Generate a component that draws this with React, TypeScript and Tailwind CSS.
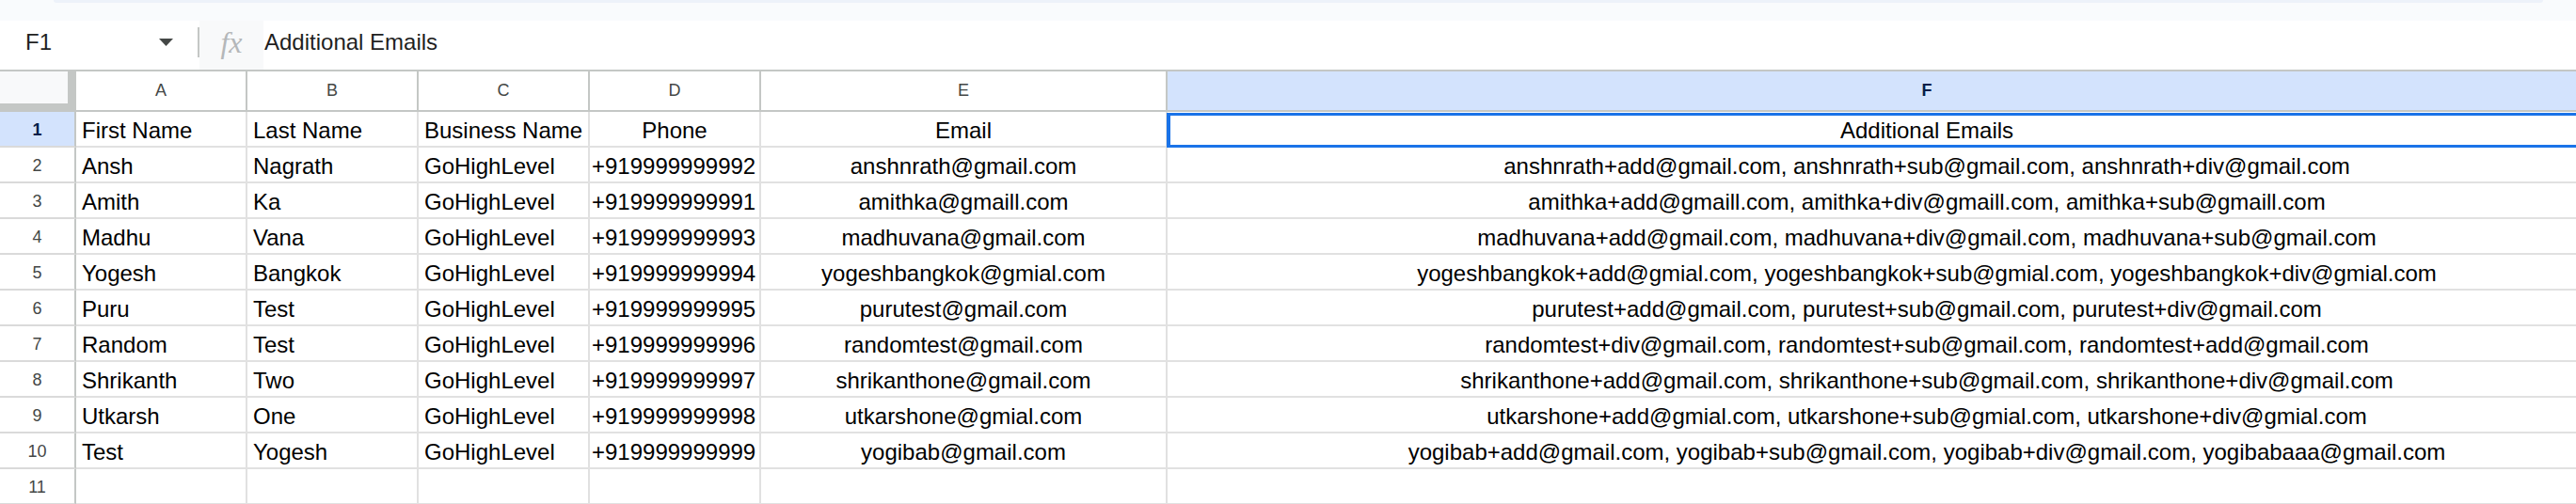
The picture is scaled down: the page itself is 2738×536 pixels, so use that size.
type Col = { letter: string; width: string }

const columns: Col[] = [
  { letter: 'A', width: 'w-[182px]' },
  { letter: 'B', width: 'w-[182px]' },
  { letter: 'C', width: 'w-[182px]' },
  { letter: 'D', width: 'w-[182px]' },
  { letter: 'E', width: 'w-[432px]' },
  { letter: 'F', width: 'w-[1616px]' },
]

const rows: string[][] = [
  ['First Name', 'Last Name', 'Business Name', 'Phone', 'Email', 'Additional Emails'],
  ['Ansh', 'Nagrath', 'GoHighLevel', '+919999999992', 'anshnrath@gmail.com', 'anshnrath+add@gmail.com, anshnrath+sub@gmail.com, anshnrath+div@gmail.com'],
  ['Amith', 'Ka', 'GoHighLevel', '+919999999991', 'amithka@gmaill.com', 'amithka+add@gmaill.com, amithka+div@gmaill.com, amithka+sub@gmaill.com'],
  ['Madhu', 'Vana', 'GoHighLevel', '+919999999993', 'madhuvana@gmail.com', 'madhuvana+add@gmail.com, madhuvana+div@gmail.com, madhuvana+sub@gmail.com'],
  ['Yogesh', 'Bangkok', 'GoHighLevel', '+919999999994', 'yogeshbangkok@gmial.com', 'yogeshbangkok+add@gmial.com, yogeshbangkok+sub@gmial.com, yogeshbangkok+div@gmial.com'],
  ['Puru', 'Test', 'GoHighLevel', '+919999999995', 'purutest@gmail.com', 'purutest+add@gmail.com, purutest+sub@gmail.com, purutest+div@gmail.com'],
  ['Random', 'Test', 'GoHighLevel', '+919999999996', 'randomtest@gmail.com', 'randomtest+div@gmail.com, randomtest+sub@gmail.com, randomtest+add@gmail.com'],
  ['Shrikanth', 'Two', 'GoHighLevel', '+919999999997', 'shrikanthone@gmail.com', 'shrikanthone+add@gmail.com, shrikanthone+sub@gmail.com, shrikanthone+div@gmail.com'],
  ['Utkarsh', 'One', 'GoHighLevel', '+919999999998', 'utkarshone@gmial.com', 'utkarshone+add@gmial.com, utkarshone+sub@gmial.com, utkarshone+div@gmial.com'],
  ['Test', 'Yogesh', 'GoHighLevel', '+919999999999', 'yogibab@gmail.com', 'yogibab+add@gmail.com, yogibab+sub@gmail.com, yogibab+div@gmail.com, yogibabaaa@gmail.com'],
  ['', '', '', '', '', ''],
]

function FormulaBar() {
  return (
    <div className="flex h-[54px] border-b-2 border-[#c4c7c5] bg-white">
      {/* Name box */}
      <div className="flex w-[210px] items-center pb-[6px] pl-[27px] pr-[26px]">
        <span className="text-[24px] text-[#1f1f1f]">F1</span>
        <svg className="ml-auto" width="15" height="8" viewBox="0 0 15 8">
          <polygon points="0,0 15,0 7.5,8" fill="#444746" />
        </svg>
      </div>
      <div className="flex items-center pb-[6px]">
        <div className="h-[32px] w-[2px] bg-[#c4c7c5]" />
      </div>
      <div className="flex w-[68px] items-center justify-center bg-[#f8f9fa] pb-[6px]">
        <span className="font-['Liberation_Serif',serif] text-[32px] italic leading-none text-[#b4b7b9]">fx</span>
      </div>
      <div className="flex items-center pb-[6px] pl-[1px]">
        <span className="text-[24px] text-[#1f1f1f]">Additional Emails</span>
      </div>
    </div>
  )
}

function HeaderRow() {
  return (
    <div className="flex h-[43px] shrink-0">
      {/* Corner with freeze handles */}
      <div className="h-[43px] w-[81px] shrink-0 bg-[#c4c7c5]">
        <div className="h-[34px] w-[72px] bg-[#f8f9fa]" />
      </div>
      {columns.map(col => {
        const active = col.letter === 'F'
        return (
          <div
            key={col.letter}
            className={`${col.width} flex shrink-0 justify-center border-r-2 border-b-2 border-[#c4c7c5] text-[18px] leading-[41px] ${
              active ? 'bg-[#d3e3fd] font-bold text-[#041e49]' : 'bg-white text-[#444746]'
            }`}
          >
            {col.letter}
          </div>
        )
      })}
    </div>
  )
}

function DataRow({ cells, index }: { cells: string[]; index: number }) {
  const isHeader = index === 0
  return (
    <div className="flex h-[38px] shrink-0">
      <div
        className={`flex h-[38px] w-[81px] shrink-0 justify-center border-r-2 border-b-2 border-r-[#c4c7c5] border-b-[#dadada] text-[18px] leading-[38px] ${
          isHeader ? 'bg-[#d3e3fd] font-bold text-[#041e49]' : 'bg-white text-[#444746]'
        }`}
      >
        {index + 1}
      </div>
      {cells.map((text, ci) => {
        const centered = ci >= 4 || (isHeader && ci === 3)
        const selected = isHeader && ci === 5
        const tight = ci === 3 && !isHeader
        return (
          <div
            key={ci}
            className={`${columns[ci].width} relative h-[38px] shrink-0 whitespace-nowrap border-r-2 border-b-2 border-[#e1e1e1] bg-white text-[24px] leading-[40px] text-black ${
              tight ? 'px-[2px]' : 'px-[6px]'
            } ${centered ? 'text-center' : 'text-left'}`}
          >
            <div className="h-[36px]">{text}</div>
            {selected && (
              <div className="absolute -left-[1px] top-[1px] -bottom-[3px] -right-[2px] border-4 border-t-[3px] border-[#1a73e8]" />
            )}
          </div>
        )
      })}
    </div>
  )
}

export default function App() {
  return (
    <div className="h-[536px] w-[2738px] overflow-hidden bg-white font-['Liberation_Sans',Arial,sans-serif]">
      {/* Toolbar bottom edge */}
      <div className="h-[22px] bg-[#f9fbfd]">
        <div className="ml-[57px] h-[3px] w-[2646px] rounded-b-[3px] bg-[#edf2fa]" />
      </div>
      <FormulaBar />
      <div className="flex w-max flex-col">
        <HeaderRow />
        {rows.map((r, i) => (
          <DataRow key={i} cells={r} index={i} />
        ))}
      </div>
    </div>
  )
}
